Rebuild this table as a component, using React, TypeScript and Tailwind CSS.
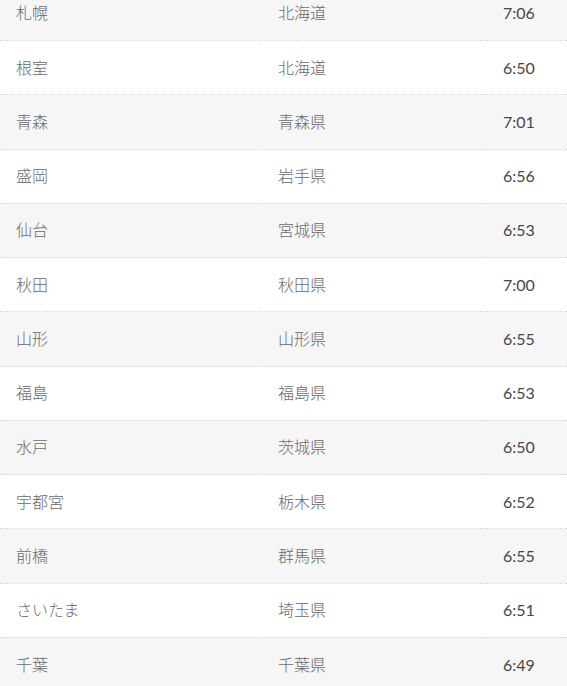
const rows: [string, string, string][] = [
  ["札幌", "北海道", "7:06"],
  ["根室", "北海道", "6:50"],
  ["青森", "青森県", "7:01"],
  ["盛岡", "岩手県", "6:56"],
  ["仙台", "宮城県", "6:53"],
  ["秋田", "秋田県", "7:00"],
  ["山形", "山形県", "6:55"],
  ["福島", "福島県", "6:53"],
  ["水戸", "茨城県", "6:50"],
  ["宇都宮", "栃木県", "6:52"],
  ["前橋", "群馬県", "6:55"],
  ["さいたま", "埼玉県", "6:51"],
  ["千葉", "千葉県", "6:49"],
];

const jp = "font-['Lato','Noto_Sans_CJK_JP',sans-serif]";

export default function App() {
  return (
    <div className="w-[567px] h-[686px] overflow-hidden bg-white">
      <table className={`w-full border-collapse -mt-[13.8px] ${jp}`}>
        <tbody>
          {rows.map(([city, pref, time], i) => (
            <tr key={city} className={i % 2 === 0 ? "bg-[#f6f6f6]" : "bg-white"}>
              <td className="w-[262px] h-[54.27px] px-4 border-b border-dotted border-[#d6d6d6] text-[16px] font-light text-[#6a6a6a] align-middle">
                {city}
              </td>
              <td className="w-[225px] h-[54.27px] px-4 border-b border-dotted border-[#d6d6d6] text-[16px] font-light text-[#6a6a6a] align-middle">
                {pref}
              </td>
              <td className="h-[54.27px] px-4 border-b border-dotted border-[#d6d6d6] text-[16px] text-[#474747] align-middle">
                {time}
              </td>
            </tr>
          ))}
        </tbody>
      </table>
    </div>
  );
}
